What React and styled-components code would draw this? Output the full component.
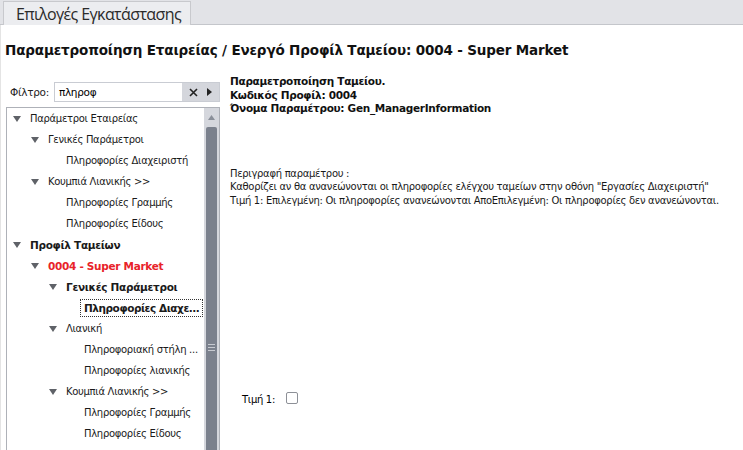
import React from "react"
import styled, { createGlobalStyle } from "styled-components"

const GlobalStyle = createGlobalStyle`
  body {
    margin: 0;
    background: #ffffff;
    font-family: "DejaVu Sans", sans-serif;
    color: #000;
  }
`

const Screen = styled.div`
  width: 743px;
  height: 450px;
  overflow: hidden;
  display: flex;
  flex-direction: column;
`

const TabBar = styled.div`
  height: 25px;
  flex: none;
  background: #e2e3e7;
  border-bottom: 1px solid #c4c6cb;
  display: flex;
  align-items: flex-end;
  padding-left: 3px;
  box-sizing: border-box;
`

const Tab = styled.div`
  height: 24px;
  box-sizing: border-box;
  margin-bottom: -1px;
  padding: 0 9px 0 12px;
  background: #ecedf0;
  border: 1px solid #c8c9cd;
  border-bottom: none;
  font-family: "Open Sans", sans-serif;
  font-size: 16px;
  letter-spacing: -0.6px;
  color: #2a2a2a;
  display: flex;
  align-items: center;
`

const Page = styled.div`
  flex: 1;
  min-height: 0;
  border-left: 1px solid #e4e4e4;
  display: flex;
  flex-direction: column;
`

const Title = styled.h1`
  margin: 0;
  padding: 17px 0 0 4px;
  height: 42px;
  box-sizing: border-box;
  font-family: "DejaVu Sans", sans-serif;
  font-size: 13.5px;
  font-weight: bold;
  letter-spacing: -0.15px;
  color: #111;
`

const Body = styled.div`
  flex: 1;
  min-height: 0;
  display: flex;
`

const LeftPane = styled.div`
  width: 214px;
  margin-left: 5px;
  flex: none;
  display: flex;
  flex-direction: column;
  padding-top: 15px;
`

const FilterRow = styled.div`
  display: flex;
  align-items: center;
  gap: 5px;
  padding-left: 4px;
  height: 20px;
  margin-bottom: 5px;
`

const Label = styled.span`
  font-size: 10.5px;
  letter-spacing: -0.3px;
  color: #222;
`

const FilterBox = styled.div`
  flex: 1;
  height: 20px;
  box-sizing: border-box;
  border: 1px solid #c9ccd3;
  display: flex;
  align-items: stretch;
`

const FilterInput = styled.div`
  flex: 1;
  padding-left: 4px;
  display: flex;
  align-items: center;
  font-size: 10.5px;
  letter-spacing: -0.3px;
`

const FilterButtons = styled.div`
  width: 33px;
  background: #d4d6dc;
  display: flex;
  align-items: center;
  justify-content: space-around;
  padding: 0 2px;
`

const Tree = styled.div`
  flex: 1;
  min-height: 0;
  border: 1px solid #aeb1b8;
  border-bottom: none;
  display: flex;
  overflow: hidden;
`

const TreeList = styled.div`
  flex: 1;
  min-width: 0;
`

const Node = styled.div`
  height: 21px;
  display: flex;
  align-items: center;
  padding-left: ${p => 6 + p.level * 18}px;
  font-size: ${p => (p.bold ? "10.5px" : "10px")};
  letter-spacing: ${p => (p.focused ? "-0.45px" : "-0.3px")};
  font-weight: ${p => (p.bold ? "bold" : "normal")};
  color: ${p => (p.red ? "#e8232a" : "#1a1a1a")};
  white-space: nowrap;
`

const Caret = styled.span`
  width: 16px;
  flex: none;
  display: flex;
  align-items: center;
  svg {
    display: block;
  }
`

const NodeText = styled.span`
  padding: 2px 3px;
  margin-left: -3px;
  border: 1px dotted ${p => (p.focused ? "#333" : "transparent")};
`

const ScrollTrack = styled.div`
  width: 15px;
  flex: none;
  background: #d5d7dd;
  display: flex;
  flex-direction: column;
  align-items: center;
`

const ScrollArrow = styled.div`
  height: 19px;
  flex: none;
  display: flex;
  align-items: center;
  justify-content: center;
`

const ScrollThumb = styled.div`
  width: 11px;
  flex: 1;
  background: #7b818d;
  border-radius: 2px 2px 0 0;
  display: flex;
  flex-direction: column;
  align-items: center;
  padding-top: 217px;
  box-sizing: border-box;
  gap: 2px;
`

const Grip = styled.div`
  width: 7px;
  height: 1px;
  flex: none;
  background: #c7cad1;
`

const RightPane = styled.div`
  flex: 1;
  padding: 8px 0 0 10px;
  display: flex;
  flex-direction: column;
`

const Info = styled.div`
  font-size: 10.5px;
  letter-spacing: -0.3px;
  font-weight: bold;
  line-height: 13.5px;
  color: #111;
`

const Description = styled.div`
  margin-top: 51px;
  font-size: 10px;
  letter-spacing: -0.3px;
  line-height: 13.5px;
  color: #1a1a1a;
  white-space: nowrap;
`

const ValueRow = styled.div`
  margin-top: 187px;
  margin-left: 12px;
  display: flex;
  align-items: center;
  gap: 11px;
  font-size: 10px;
  letter-spacing: -0.3px;
`

const Check = styled.span`
  width: 10px;
  height: 10px;
  border: 1px solid #8d9097;
  border-radius: 2px;
  background: #fff;
  margin-top: -4px;
`

const Tri = () => (
  <svg width="8" height="6" viewBox="0 0 8 6">
    <path d="M0 0 L8 0 L4 6 Z" fill="#5f6268" />
  </svg>
)

const nodes = [
  { level: 0, text: "Παράμετροι Εταιρείας" },
  { level: 1, text: "Γενικές Παράμετροι" },
  { level: 2, text: "Πληροφορίες Διαχειριστή", leaf: true },
  { level: 1, text: "Κουμπιά Λιανικής >>" },
  { level: 2, text: "Πληροφορίες Γραμμής", leaf: true },
  { level: 2, text: "Πληροφορίες Είδους", leaf: true },
  { level: 0, text: "Προφίλ Ταμείων", bold: true },
  { level: 1, text: "0004 - Super Market", bold: true, red: true },
  { level: 2, text: "Γενικές Παράμετροι", bold: true },
  { level: 3, text: "Πληροφορίες Διαχε...", leaf: true, bold: true, focused: true },
  { level: 2, text: "Λιανική" },
  { level: 3, text: "Πληροφοριακή στήλη ...", leaf: true },
  { level: 3, text: "Πληροφορίες λιανικής", leaf: true },
  { level: 2, text: "Κουμπιά Λιανικής >>" },
  { level: 3, text: "Πληροφορίες Γραμμής", leaf: true },
  { level: 3, text: "Πληροφορίες Είδους", leaf: true },
]

const App = () => (
  <Screen>
    <GlobalStyle />
    <TabBar>
      <Tab>Επιλογές Εγκατάστασης</Tab>
    </TabBar>
    <Page>
      <Title>Παραμετροποίηση Εταιρείας / Ενεργό Προφίλ Ταμείου: 0004 - Super Market</Title>
      <Body>
        <LeftPane>
          <FilterRow>
            <Label>Φίλτρο:</Label>
            <FilterBox>
              <FilterInput>πληροφ</FilterInput>
              <FilterButtons>
                <svg width="9" height="9" viewBox="0 0 9 9">
                  <path d="M1 1 L8 8 M8 1 L1 8" stroke="#222" strokeWidth="1.6" />
                </svg>
                <svg width="5" height="8" viewBox="0 0 5 8">
                  <path d="M0 0 L5 4 L0 8 Z" fill="#222" />
                </svg>
              </FilterButtons>
            </FilterBox>
          </FilterRow>
          <Tree>
            <TreeList>
              {nodes.map((n, i) => (
                <Node key={i} level={n.level} bold={n.bold} red={n.red} focused={n.focused}>
                  <Caret>{n.leaf ? null : <Tri />}</Caret>
                  <NodeText focused={n.focused}>{n.text}</NodeText>
                </Node>
              ))}
            </TreeList>
            <ScrollTrack>
              <ScrollArrow>
                <svg width="7" height="5" viewBox="0 0 7 5">
                  <path d="M0 5 L3.5 0 L7 5 Z" fill="#8a8f99" />
                </svg>
              </ScrollArrow>
              <ScrollThumb>
                <Grip />
                <Grip />
                <Grip />
              </ScrollThumb>
            </ScrollTrack>
          </Tree>
        </LeftPane>
        <RightPane>
          <Info>
            Παραμετροποίηση Ταμείου.
            <br />
            Κωδικός Προφίλ: 0004
            <br />
            Όνομα Παραμέτρου: Gen_ManagerInformation
          </Info>
          <Description>
            Περιγραφή παραμέτρου :
            <br />
            Καθορίζει αν θα ανανεώνονται οι πληροφορίες ελέγχου ταμείων στην οθόνη "Εργασίες Διαχειριστή"
            <br />
            Τιμή 1: Επιλεγμένη: Οι πληροφορίες ανανεώνονται ΑποΕπιλεγμένη: Οι πληροφορίες δεν ανανεώνονται.
          </Description>
          <ValueRow>
            <span>Τιμή 1:</span>
            <Check />
          </ValueRow>
        </RightPane>
      </Body>
    </Page>
  </Screen>
)

export default App
